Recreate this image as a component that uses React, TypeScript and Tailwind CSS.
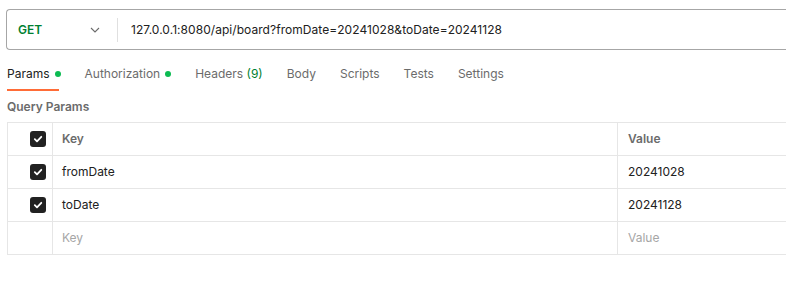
import React from "react";

const rows = [
  { key: "fromDate", value: "20241028" },
  { key: "toDate", value: "20241128" },
];

const Check = () => (
  <span className="flex h-4 w-4 items-center justify-center rounded-[3px] bg-[#212121]">
    <svg width="10" height="10" viewBox="0 0 10 10" fill="none">
      <path d="M1.8 5.2 L4 7.3 L8.3 2.8" stroke="#fff" strokeWidth="1.8" strokeLinecap="round" strokeLinejoin="round" />
    </svg>
  </span>
);

const Dot = () => <span className="ml-[5px] inline-block h-[6px] w-[6px] rounded-full bg-[#0cbb52]" />;

export default function App() {
  const tabs = ["Body", "Scripts", "Tests", "Settings"];

  return (
    <div className="h-[292px] w-[786px] overflow-hidden bg-white font-['Inter',sans-serif] text-[12px] text-[#212121]">
      {/* url bar */}
      <div className="pl-[6px] pt-[9px]">
        <div className="flex h-[41px] items-center rounded-l-[4px] border border-r-0 border-[#a6a6a6]">
          <div className="flex w-[110px] items-center justify-between pl-[11px] pr-[17px]">
            <span className="font-semibold text-[#007f31]">GET</span>
            <svg width="10" height="6" viewBox="0 0 10 6" fill="none">
              <path d="M1 1 L5 5 L9 1" stroke="#6b6b6b" strokeWidth="1.1" />
            </svg>
          </div>
          <div className="h-[24px] w-px bg-[#e0e0e0]" />
          <span className="pl-[13px] tracking-[0.05px]">127.0.0.1:8080/api/board?fromDate=20241028&amp;toDate=20241128</span>
        </div>
      </div>

      {/* tabs */}
      <div className="flex items-start gap-[24px] pl-[7px] pt-[15px] text-[#6b6b6b]">
        <div className="flex flex-col">
          <span className="flex items-center text-[#212121]">
            Params
            <Dot />
          </span>
          <span className="mt-[6px] h-[2px] w-[52px] bg-[#ff6c37]" />
        </div>
        <span className="flex items-center">
          Authorization
          <Dot />
        </span>
        <span>
          Headers <span className="text-[#007f31]">(9)</span>
        </span>
        {tabs.map((t) => (
          <span key={t}>{t}</span>
        ))}
      </div>

      <div className="pl-[7px] pt-[7px] font-semibold text-[#6b6b6b]">Query Params</div>

      {/* table */}
      <div className="ml-[7px] mt-[6px] border-l border-t border-[#e6e6e6]">
        <div className="flex h-[33px] items-center border-b border-[#e6e6e6] font-semibold text-[#6b6b6b]">
          <div className="flex h-full w-[44px] items-center justify-end pr-[6px]">
            <Check />
          </div>
          <div className="flex h-full w-[565px] items-center border-l border-[#e6e6e6] pl-[9px]">Key</div>
          <div className="flex h-full flex-1 items-center border-l border-[#e6e6e6] pl-[10px]">Value</div>
        </div>
        {rows.map((r) => (
          <div key={r.key} className="flex h-[33px] items-center border-b border-[#e6e6e6]">
            <div className="flex h-full w-[44px] items-center justify-end pr-[6px]">
              <Check />
            </div>
            <div className="flex h-full w-[565px] items-center border-l border-[#e6e6e6] pl-[9px]">{r.key}</div>
            <div className="flex h-full flex-1 items-center border-l border-[#e6e6e6] pl-[10px]">{r.value}</div>
          </div>
        ))}
        <div className="flex h-[33px] items-center border-b border-[#e6e6e6] text-[#a6a6a6]">
          <div className="h-full w-[44px]" />
          <div className="flex h-full w-[565px] items-center border-l border-[#e6e6e6] pl-[9px]">Key</div>
          <div className="flex h-full flex-1 items-center border-l border-[#e6e6e6] pl-[10px]">Value</div>
        </div>
      </div>
    </div>
  );
}
